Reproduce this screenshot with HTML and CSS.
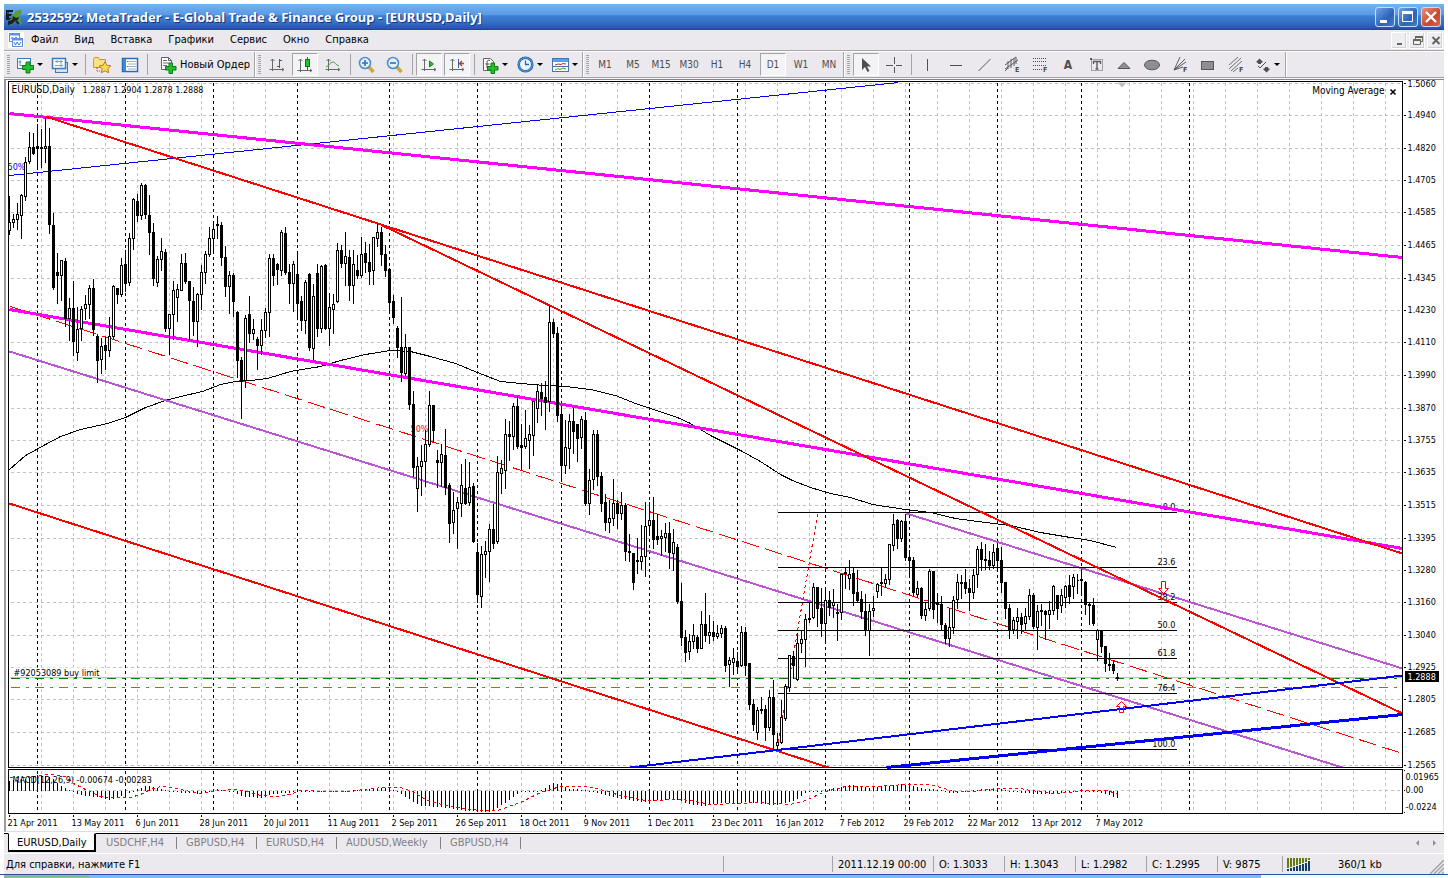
FILE: index.html
```html
<!DOCTYPE html>
<html lang="ru">
<head>
<meta charset="utf-8">
<title>2532592: MetaTrader - E-Global Trade &amp; Finance Group - [EURUSD,Daily]</title>
<link rel="stylesheet" href="styles.css">
</head>
<body>
<div class="window">
  <header class="title-bar">
    <svg class="app-icon" width="16" height="16" viewBox="0 0 16 16"><path d="M0 1h7v2H3v2h3v2H3v2h3v2H0z" fill="#15191f"/><path d="M1 4h5M4 8h3" stroke="#3f74c8"/><path d="M8 5l2-4 2 1 2-2 2 3-3 4 2 3-1 2 2 3-3 1-4-4-3 4-4-1 1-4 3-2-1-3z" fill="#5d9a35"/><path d="M7 7l3 2 3-1-1 3-3 1-3 3-4 1v-4l4-1z" fill="#16202c"/><path d="M10 12l3 3" stroke="#16202c" stroke-width="2"/></svg>
    <h1 class="title-text">2532592: MetaTrader - E-Global Trade &amp; Finance Group - [EURUSD,Daily]</h1>
    <div class="caption-buttons">
      <button class="caption" aria-label="Свернуть"><svg width="18" height="18" viewBox="0 0 18 18"><path d="M4 12h7v3H4z" fill="#fff"/></svg></button>
      <button class="caption" aria-label="Развернуть"><svg width="18" height="18" viewBox="0 0 18 18"><path d="M3.500 4.500h10v9h-10z" fill="none" stroke="#fff"/><path d="M3 4.500h11" stroke="#fff" stroke-width="3"/></svg></button>
      <button class="caption caption-close" aria-label="Закрыть"><svg width="18" height="18" viewBox="0 0 18 18"><path d="M4 4l10 10M14 4L4 14" stroke="#fff" stroke-width="2.400"/></svg></button>
    </div>
  </header>

  <nav class="menu-bar">
    <svg width="16" height="16" viewBox="0 0 16 16"><rect width="16" height="16" fill="#fff"/><rect x="1.500" y="1.500" width="10" height="8" fill="#fff" stroke="#5d92e0"/><path d="M1 2.500h11" stroke="#5d92e0" stroke-width="2"/><path d="M3 7l1.500-2L6 7l2-2 2 2" fill="none" stroke="#5d92e0"/><rect x="4.500" y="6.500" width="10" height="8" fill="#fff" stroke="#5d92e0"/><path d="M4 7.500h11" stroke="#5d92e0" stroke-width="2"/><path d="M6 10l1.500 3L9 10l2 3 2-3" fill="none" stroke="#3b7ad6"/></svg>
    <a href="#file">Файл</a><a href="#view">Вид</a><a href="#insert">Вставка</a><a href="#charts">Графики</a><a href="#tools">Сервис</a><a href="#window">Окно</a><a href="#help">Справка</a>
    <div class="mdi-buttons">
      <button aria-label="Свернуть график"><svg width="14" height="15" viewBox="0 0 14 15"><path d="M4 9h5v2H4z" fill="#66665f"/></svg></button>
      <button aria-label="Восстановить график"><svg width="14" height="15" viewBox="0 0 14 15"><path d="M4.500 5V2.500h7v5H10M2.500 5.500h7v5h-7z" fill="none" stroke="#66665f"/><path d="M4 3h8M2 6h8" stroke="#66665f" stroke-width="2"/></svg></button>
      <button aria-label="Закрыть график"><svg width="14" height="15" viewBox="0 0 14 15"><path d="M3.500 3l7 7M10.500 3l-7 7" stroke="#66665f" stroke-width="2"/></svg></button>
    </div>
  </nav>

  <div class="toolbars">
    <div class="band">
      <button class="tool drop" aria-label="Новый график"><svg width="18" height="18" viewBox="0 0 18 18"><rect x="1.500" y="2.500" width="13" height="10" fill="#fff" stroke="#3f78b4"/><path d="M4 4v6M2.500 6h3M4 9.500h8" stroke="#5b92c8" fill="none"/><path d="M10 6h4v3.500h3.500v4H14V17h-4v-3.500H6.500v-4H10z" fill="#22c12c" stroke="#087a12"/></svg><i class="arrow"></i></button>
      <button class="tool drop" aria-label="Профили"><svg width="18" height="18" viewBox="0 0 18 18"><rect x="4.500" y="6.500" width="12" height="10" fill="#cfe3f7" stroke="#3f78b4"/><rect x="1.500" y="2.500" width="13" height="10" fill="#fff" stroke="#3f78b4" stroke-width="1.500"/><path d="M4 5.500h8M4 9.500h8M10 4v7M6 4v3" stroke="#6f9fd0" fill="none"/></svg><i class="arrow"></i></button>
      <span class="sep"></span>
      <button class="tool" aria-label="Избранное"><svg width="20" height="18" viewBox="0 0 20 18"><path d="M1.500 3.500l1-2h4l1 2h6v8h-12z" fill="#f8e37c" stroke="#c79a22"/><path d="M5 11v4h3" fill="none" stroke="#b5473c" stroke-dasharray="2 1"/><path d="M13 5.500l1.900 3.800 4 .5-3 2.800.8 4.200-3.700-2-3.700 2 .8-4.200-3-2.800 4-.5z" fill="#fbd85a" stroke="#b98212"/></svg></button>
      <button class="tool" aria-label="Обзор рынка"><svg width="18" height="16" viewBox="0 0 18 16"><rect x="1.500" y="1.500" width="15" height="13" fill="#fff" stroke="#2a6cb8" stroke-width="1.500"/><path d="M2 2h3v12H2z" fill="#3a8ae0"/><path d="M7 4.500h8M7 7h8M7 9.500h8M7 12h8" stroke="#9ab0cc"/><path d="M6 4h1v1H6zM6 9h1v1H6z" fill="#d33"/></svg></button>
      <span class="sep"></span>
      <button class="tool order"><svg width="18" height="18" viewBox="0 0 18 18"><path d="M2.500 1.500h7l3 3v9h-10z" fill="#fff" stroke="#5f6266"/><path d="M9.500 1.500v3h3" fill="none" stroke="#5f6266"/><path d="M4 4.500h4M4 7h6M4 9.500h4" stroke="#6d7074"/><path d="M10 7h3.500v3.500H17v3.500h-3.500v3.500H10V14H6.500v-3.500H10z" fill="#22c12c" stroke="#087a12"/></svg>Новый Ордер</button>
    </div>
    <div class="band">
      <button class="tool" aria-label="Бары"><svg width="18" height="16" viewBox="0 0 18 16"><path d="M4.500 2v12M1.500 12.500h14M2.500 4l2-2 2 2M14 11l2 1.500-2 1.500" fill="none" stroke="#66696c"/><path d="M11.500 2v9M9 9.500h2.500M11.500 3.500H14" fill="none" stroke="#178a1e"/></svg></button>
      <button class="tool pressed" aria-label="Свечи"><svg width="18" height="18" viewBox="0 0 18 18"><path d="M4.500 3v13M1.500 14.500h14M2.500 5l2-2 2 2M14 13l2 1.500-2 1.500" fill="none" stroke="#66696c"/><path d="M11.500 1v13" stroke="#178a1e"/><rect x="9.500" y="3.500" width="4" height="7" fill="#22c12c" stroke="#087a12"/></svg></button>
      <button class="tool" aria-label="Линия"><svg width="18" height="16" viewBox="0 0 18 16"><path d="M4.500 2v12M1.500 12.500h14M2.500 4l2-2 2 2M14 11l2 1.500-2 1.500" fill="none" stroke="#66696c"/><path d="M2 10c3-1 4-5 7-5 2 0 3 3 6 4" fill="none" stroke="#4f9a54"/></svg></button>
      <span class="sep"></span>
      <button class="tool" aria-label="Увеличить"><svg width="18" height="18" viewBox="0 0 18 18"><path d="M10.500 10.500l5 5.500" stroke="#d0a93a" stroke-width="3.500"/><circle cx="7" cy="7" r="5.500" fill="#e3f1fd" stroke="#4c8fd2" stroke-width="1.600"/><path d="M4 7h6M7 4v6" stroke="#2a70bd" stroke-width="1.600"/></svg></button>
      <button class="tool" aria-label="Уменьшить"><svg width="18" height="18" viewBox="0 0 18 18"><path d="M10.500 10.500l5 5.500" stroke="#d0a93a" stroke-width="3.500"/><circle cx="7" cy="7" r="5.500" fill="#e3f1fd" stroke="#4c8fd2" stroke-width="1.600"/><path d="M4 7h6" stroke="#2a70bd" stroke-width="1.600"/></svg></button>
      <span class="sep"></span>
      <button class="tool pressed" aria-label="Автопрокрутка"><svg width="18" height="16" viewBox="0 0 18 16"><path d="M4.500 2v12M1.500 12.500h14M2.500 4l2-2 2 2M14 11l2 1.500-2 1.500" fill="none" stroke="#66696c"/><path d="M9.500 4l4 3-4 3z" fill="#22c12c" stroke="#178a1e"/></svg></button>
      <button class="tool pressed" aria-label="Сдвиг графика"><svg width="18" height="16" viewBox="0 0 18 16"><path d="M4.500 2v12M1.500 12.500h14M2.500 4l2-2 2 2M14 11l2 1.500-2 1.500" fill="none" stroke="#66696c"/><path d="M10.500 2v9" stroke="#2b62a8"/><path d="M16 6.500h-4.500M14 4l-2.500 2.500L14 9" fill="none" stroke="#b8401c" stroke-width="1.400"/></svg></button>
      <span class="sep"></span>
      <button class="tool drop" aria-label="Индикаторы"><svg width="17" height="18" viewBox="0 0 17 18"><path d="M1.500 2.500h7l3 3v9h-10z" fill="#fff" stroke="#5f6266"/><path d="M8 4.500c-2-.8-3 0-3 2V12M3.500 8h4" fill="none" stroke="#44474a"/><path d="M9 7h3.500v3.500H16v3.500h-3.500v3.500H9V14H5.500v-3.500H9z" fill="#22c12c" stroke="#087a12"/></svg><i class="arrow"></i></button>
      <button class="tool drop" aria-label="Периоды"><svg width="17" height="17" viewBox="0 0 17 17"><circle cx="8.500" cy="8.500" r="6.800" fill="#eef6fd" stroke="#2363ae" stroke-width="2.600"/><circle cx="8.500" cy="8.500" r="6.800" fill="none" stroke="#5fa0e4" stroke-width="1"/><path d="M8.500 4.500v4H12" fill="none" stroke="#33669a" stroke-width="1.300"/></svg><i class="arrow"></i></button>
      <button class="tool drop" aria-label="Шаблоны"><svg width="17" height="16" viewBox="0 0 17 16"><rect x=".500" y="1.500" width="16" height="13" fill="#fff" stroke="#3f78b4"/><path d="M1 2h15v3H1z" fill="#5c9ee6"/><path d="M3 8l3-1 3 .500 2-1 3 .500" fill="none" stroke="#a5382b"/><path d="M1 9.500h15" stroke="#3f78b4"/><path d="M3 13l3-1.500 2 1 3-1.500 3 1" fill="none" stroke="#3a9a3e"/></svg><i class="arrow"></i></button>
    </div>
    <div class="band">
      <button class="tool">M1</button><button class="tool">M5</button><button class="tool">M15</button><button class="tool">M30</button><button class="tool">H1</button><button class="tool">H4</button><button class="tool pressed">D1</button><button class="tool">W1</button><button class="tool">MN</button>
    </div>
    <div class="band drawing">
      <button class="tool pressed" aria-label="Курсор"><svg width="16" height="16" viewBox="0 0 16 16"><path d="M4 1v12l3-3 2.500 5 2-1L9 9.500h4z" fill="#4d4f52"/></svg></button>
      <button class="tool" aria-label="Перекрестие"><svg width="16" height="16" viewBox="0 0 16 16"><path d="M8.500 0v7M8.500 10v6M0 8.500h7M10 8.500h6" stroke="#55575a"/></svg></button>
      <span class="sep"></span>
      <button class="tool" aria-label="Вертикальная линия"><svg width="14" height="14" viewBox="0 0 14 14"><path d="M6.500 1v12" stroke="#4d4f52"/></svg></button>
      <button class="tool" aria-label="Горизонтальная линия"><svg width="14" height="14" viewBox="0 0 14 14"><path d="M1 7.500h12" stroke="#4d4f52"/></svg></button>
      <button class="tool" aria-label="Трендовая линия"><svg width="14" height="14" viewBox="0 0 14 14"><path d="M1.500 13L13.500 1" stroke="#55575a"/></svg></button>
      <button class="tool" aria-label="Канал"><svg width="17" height="17" viewBox="0 0 17 17"><path d="M1 9l11-8M1 13L14 4M4 5v8M7 3v9M10 2v8M12 1v7M1 15l3-3" stroke="#5a5c60" fill="none"/><text x="11" y="16" class="glyph">E</text></svg></button>
      <button class="tool" aria-label="Линии Фибоначчи"><svg width="17" height="17" viewBox="0 0 17 17"><path d="M1 2.500h14M1 5.500h14M1 9.500h14M1 13.500h9" stroke="#4d4f52" stroke-dasharray="1 1"/><text x="11" y="16" class="glyph">F</text></svg></button>
      <button class="tool letter">A</button>
      <button class="tool" aria-label="Текстовая метка"><svg width="15" height="15" viewBox="0 0 15 15"><rect x="2.500" y="2.500" width="11" height="11" fill="none" stroke="#5a5c60" stroke-dasharray="1 1"/><path d="M1 1h2v2H1z" fill="#5a5c60"/><path d="M4 4.500h8M8 5v7M4.500 4v3M11.500 4v3M6.500 12h3" fill="none" stroke="#5a5c60" stroke-width="1.400"/></svg></button>
      <button class="tool" aria-label="Треугольник"><svg width="16" height="14" viewBox="0 0 16 14"><path d="M2 10.500l6-6 6 6z" fill="#8e8f92" stroke="#55575a"/></svg></button>
      <button class="tool" aria-label="Эллипс"><svg width="18" height="14" viewBox="0 0 18 14"><ellipse cx="9" cy="7" rx="7.500" ry="4.800" fill="#8e8f92" stroke="#55575a"/></svg></button>
      <button class="tool" aria-label="Веер Фибоначчи"><svg width="17" height="17" viewBox="0 0 17 17"><path d="M2 14L8 1M2 14l11-11M2 14l12-8M2 14l9-3" stroke="#5a5c60"/><text x="11" y="16" class="glyph">F</text></svg></button>
      <button class="tool" aria-label="Прямоугольник"><svg width="16" height="14" viewBox="0 0 16 14"><rect x="1.500" y="3.500" width="12" height="8" fill="#8e8f92" stroke="#55575a"/></svg></button>
      <button class="tool" aria-label="Канал Фибоначчи"><svg width="17" height="17" viewBox="0 0 17 17"><path d="M1 9l9-8M1 13L13 2M3 15L14 5M5 16l5-4" stroke="#6e7074"/><text x="11" y="16" class="glyph">F</text></svg></button>
      <button class="tool drop" aria-label="Стрелки"><svg width="16" height="16" viewBox="0 0 16 16"><path d="M1 5l3.500-3.500L8 5 6 6v1H3V6zM8 12l2-1v-1h3v1l2 1-3.500 3.500z" fill="#4d4f52"/><path d="M3 9l2 2 6-6" stroke="#4d4f52" fill="none"/></svg><i class="arrow"></i></button>
    </div>
  </div>

  <main class="chart-frame">
    <svg class="chart" id="chart" viewBox="5.500 79.500 1437 751" role="img" aria-label="EURUSD,Daily"></svg>
  </main>

  <nav class="tabs">
    <a class="tab active" href="#eurusd-daily">EURUSD,Daily</a><a class="tab" href="#usdchf">USDCHF,H4</a><a class="tab" href="#gbpusd">GBPUSD,H4</a><a class="tab" href="#eurusd">EURUSD,H4</a><a class="tab" href="#audusd">AUDUSD,Weekly</a><a class="tab" href="#gbpusd-2">GBPUSD,H4</a>
    <div class="tab-scroll">
      <button aria-label="Назад"><svg width="5" height="8" viewBox="0 0 5 8"><path d="M4 1v6L1 4z" fill="#8e8f92"/></svg></button>
      <button aria-label="Вперёд"><svg width="5" height="8" viewBox="0 0 5 8"><path d="M1 1v6l3-3z" fill="#8e8f92"/></svg></button>
    </div>
  </nav>

  <footer class="status">
    <span class="cell help">Для справки, нажмите F1</span>
    <span class="cell profile"></span>
    <span class="cell time">2011.12.19 00:00</span>
    <span class="cell value">O: 1.3033</span>
    <span class="cell value">H: 1.3043</span>
    <span class="cell value">L: 1.2982</span>
    <span class="cell value">C: 1.2995</span>
    <span class="cell volume">V: 9875</span>
    <span class="cell link"><svg width="24" height="13" viewBox="0 0 24 13"><path d="M1 0v10M4 0v9M7 0v8M10 0v7M13 0v6M16 0v5M19 0v4M22 0v2" stroke="#667a14" stroke-width="2"/><path d="M1 11v2M4 10v3M7 9v4M10 8v5M13 7v6M16 6v7M19 5v8M22 3v10" stroke="#123f63" stroke-width="2"/></svg>360/1 kb</span>
    <svg class="resize" width="14" height="14" viewBox="0 0 14 14"><path d="M0 14L14 0M4 14L14 4M8 14l6-6M12 14l2-2" stroke="#a6a5aa" stroke-width="1.500"/></svg>
  </footer>
</div>
<div class="taskbar"><span class="start"></span><span class="tasks"></span><span class="tray"></span></div>
<script src="chart.js"></script>
</body>
</html>
```
FILE: styles.css
```css
* { box-sizing: border-box; }

body {
  margin: 0;
  background: #fff;
  color: #000;
  font: 11px/14px "DejaVu Sans Condensed", "Noto Sans", sans-serif;
}

button {
  margin: 0;
  padding: 0;
  border: 0;
  background: none;
  color: inherit;
  font: inherit;
}

a { color: inherit; text-decoration: none; }
svg { display: block; flex: none; }

.window { padding: 4px 4px 0; }

.title-bar {
  display: flex;
  align-items: center;
  height: 26px;
  padding: 0 3px 0 2px;
  gap: 5px;
  background: linear-gradient(#74b6ea 0, #68a6ea 20%, #5b9be6 40%, #3c80d2 46%, #3570c6 70%, #2b52ac 94%, #1f3f94 100%);
}
.title-text {
  flex: 1;
  margin: 0;
  color: #fff;
  font: bold 13px/20px "Noto Sans", sans-serif;
  white-space: nowrap;
  text-shadow: 1px 1px 0 #16337e;
}
.caption-buttons { display: flex; gap: 3px; }
.caption {
  width: 20px;
  height: 20px;
  padding: 0;
  border: 1px solid #c4dcf6;
  border-radius: 3px;
  background: linear-gradient(135deg, #6fa5e6, #2c62b8 60%, #3f7dcc);
}
.caption-close { background: linear-gradient(135deg, #e8907a, #c9452c 60%, #d86a4c); }

.menu-bar {
  display: flex;
  align-items: center;
  height: 22px;
  padding: 0 1px 1px 4px;
  gap: 16px;
  border-bottom: 1px solid #fff;
  box-shadow: inset 0 -1px #a3a3a8;
  background: #ebe9ed;
}
.menu-bar > svg { margin-right: -9px; }
.mdi-buttons { display: flex; gap: 2px; margin-left: auto; }
.mdi-buttons button {
  width: 16px;
  height: 17px;
  padding: 1px;
  border: 1px solid #fff;
  background: #eeedf1;
  box-shadow: inset -1px -1px #d2d1d7;
}

.toolbars {
  display: flex;
  height: 28px;
  background: #ebe9ed;
  border-bottom: 1px solid #85858b;
  box-shadow: inset 0 -1px #f4f3f6, inset 0 -2px #a3a3a8;
}
.band {
  display: flex;
  align-items: center;
  height: 25px;
  border-right: 1px solid #a3a3a8;
  box-shadow: 1px 0 #fff;
  color: #4b4d50;
  font-size: 10px;
}
.band::before {
  content: "";
  width: 3px;
  height: 20px;
  margin: 0 2px 0 3px;
  background: repeating-linear-gradient(#a3a3a8 0 1px, #ebe9ed 1px 2px);
}
.tool {
  display: flex;
  align-items: center;
  justify-content: center;
  flex: none;
  width: 28px;
  height: 23px;
}
.pressed {
  margin: 0 1px;
  width: 26px;
  border: 1px solid #fff;
  border-top-color: #a3a3a8;
  border-left-color: #a3a3a8;
  background: #f4f3f6;
}
.drop { width: 35px; gap: 3px; }
.order { justify-content: flex-start; width: 104px; padding-left: 9px; gap: 3px; color: #000; font-size: 11px; }
.letter { font-size: 12px; font-weight: bold; }
.arrow {
  border: 3px solid transparent;
  border-top-color: #000;
  border-bottom: 0;
}
.sep { width: 1px; height: 21px; margin: 0 2px 0 3px; background: #a3a3a8; }
.glyph { font: bold 7px "DejaVu Sans Condensed", sans-serif; fill: #4b4d50; }

.chart-frame {
  border-left: 2px solid #9a9aa0;
  border-right: 1px solid #d9dae2;
  border-bottom: 1px solid #dcdce2;
  background: #fff;
  margin-bottom: 1px;
}
.chart { width: 100%; height: auto; overflow: visible; }
.chart text { font: 9px "DejaVu Sans Condensed", "Noto Sans", sans-serif; }
.chart .caption-text { font-size: 10px; }

.tabs {
  display: flex;
  height: 20px;
  padding-left: 4px;
  border-top: 1px solid #000;
  border-bottom: 1px solid #ebe9ed;
  background: #ebe9ed;
  color: #808086;
}
.tab { position: relative; width: 80px; padding: 2px 0 0 10px; white-space: nowrap; }
.tab:nth-child(5) { width: 104px; }
.tab:not(.active)::after {
  content: "";
  position: absolute;
  right: -1px;
  top: 3px;
  width: 1px;
  height: 12px;
  background: #808086;
}
.active {
  width: 88px;
  margin-top: -1px;
  padding-left: 8px;
  border: 1px solid #000;
  border-top-color: #fff;
  border-right-width: 2px;
  border-bottom-width: 2px;
  background: #fff;
  color: #000;
}
.tab-scroll { display: flex; gap: 12px; margin: 0 7px 0 auto; }

.status {
  display: flex;
  align-items: center;
  height: 21px;
  border-top: 1px solid #fff;
  background: #ebe9ed;
  white-space: nowrap;
}
.cell {
  height: 16px;
  padding: 2px 0 0 5px;
  border-left: 1px solid #a3a3a8;
}
.help { flex: 1; padding-left: 2px; border-left: 0; }
.profile { width: 109px; }
.time { width: 101px; }
.value { width: 71px; }
.volume { width: 65px; }
.link { display: flex; width: 148px; padding-left: 4px; gap: 27px; }
.resize { align-self: flex-end; }

.taskbar {
  display: flex;
  height: 4px;
  padding: 0 4px;
  border-top: 1px solid #2c4fae;
}
.start { width: 85px; background: #7fc08c; }
.tasks { flex: 1; background: #7dbdf2; }
.tray { width: 183px; background: #f4f8ff; }
```
FILE: chart.js
```js
const NS = 'http://www.w3.org/2000/svg';
const chart = document.getElementById('chart');

function add(tag, attrs, text) {
  const el = document.createElementNS(NS, tag);
  for (const key in attrs) el.setAttribute(key, attrs[key]);
  if (text) el.textContent = text;
  chart.appendChild(el);
}

function line(x1, y1, x2, y2, color, width = 1, dash = 'none') {
  add('path', {
    d: `M${x1} ${y1}L${x2} ${y2}`, stroke: color, fill: 'none',
    'stroke-width': width, 'stroke-dasharray': dash, 'shape-rendering': 'crispEdges'
  });
}

function curve(points, color, dash = 'none') {
  add('path', {
    d: 'M' + points.join('L'), stroke: color, fill: 'none',
    'stroke-dasharray': dash, 'shape-rendering': 'crispEdges'
  });
}

function label(x, y, text, fill = '#000', extra = {}) {
  add('text', { x, y, fill, ...extra }, text);
}

const pairs = source => source.trim().split(/\s+/).map(p => p.split(',').map(Number));

// Grid
const prices = ['1.5060', '1.4940', '1.4820', '1.4705', '1.4585', '1.4465', '1.4345', '1.4230', '1.4110', '1.3990', '1.3870', '1.3755', '1.3635', '1.3515', '1.3395', '1.3280', '1.3160', '1.3040', '1.2925', '1.2805', '1.2685', '1.2565'];
const levels = [83, 115, 148, 180, 212, 245, 278, 310, 342, 375, 408, 440, 472, 505, 538, 570, 602, 635, 667, 699, 732, 765];
levels.forEach(y => line(10, y, 1401, y, '#c0c0c0', 1, '3 3'));
for (let x = 41; x < 1400; x += 32) {
  line(x, 82, x, 767, '#c0c0c0', 1, '3 3');
  line(x, 770, x, 812, '#c0c0c0', 1, '3 3');
}
line(10, 790, 1401, 790, '#c0c0c0', 1, '3 3');
[37, 125, 213, 297, 389, 477, 561, 649, 737, 825, 909, 997, 1081, 1189].forEach(x => {
  line(x, 82, x, 767, '#000', 1, '3 3');
  line(x, 770, x, 812, '#000', 1, '3 3');
});

// Price and order levels
line(9, 677, 1402, 677, '#c0c0c0');
line(10, 678, 1402, 678, '#008000', 1, '9 6 3 6');
line(10, 687, 1402, 687, '#ff4500', 1, '9 6 3 6');

// Moving average
curve(pairs(`9,469 25,455 45,444 60,436 80,429 107,423 125,417 145,407 165,400 180,396 202,391 220,384 235,381 250,380
267,378 290,371 320,366 340,360 365,354 390,350 410,351 430,356 455,363 477,372 500,381 520,383 545,385 565,386 590,389
615,395 635,403 650,408 677,417 690,423 710,435 740,450 760,461 780,474 792,480 810,487 830,493 850,497 872,504 905,509
930,512 955,518 985,522 1010,525 1040,532 1070,537 1090,540 1116,547`), '#000');

// Trend lines and channels
line(9, 175, 898, 82, '#0000ff');
line(9, 351, 1342, 767, '#ba55d3', 2);
line(906, 513, 1402, 668, '#ba55d3', 2);
line(10, 306, 1402, 753, '#ff0000', 1, '18 6');
line(817, 514, 777, 747, '#ff0000', 1, '3 3');

// Fibonacci retracement
[[512, '0.0'], [567, '23.6'], [602, '38.2'], [630, '50.0'], [658, '61.8'], [693, '76.4'], [749, '100.0']].forEach(([y, text]) => {
  line(777, y, 1176, y, '#000');
  label(1175, y - 3, text, '#000', { 'text-anchor': 'end' });
});

line(9, 113, 1402, 257, '#ff00ff', 3);
line(9, 309, 1402, 548, '#ff00ff', 3);
line(45, 116, 1402, 553, '#ff0000', 2);
line(382, 225, 1402, 713, '#ff0000', 2);
line(9, 503, 828, 767, '#ff0000', 2);
line(630, 767, 1402, 675, '#0000ff', 2);
line(886, 767, 1402, 714, '#0000ff', 3);
label(7, 169, '50%', '#0000ff');
label(410, 431, '50%', '#ff0000');

// Candles: high, body top, body bottom, low, o = hollow / x = filled
const candles = `195 222 230 234 o|213 219 222 227 o|202 214 219 229 o|193 195 215 238 o|156 162 196 200 o|131 147 161 163 o|132 147 153 154 x|123 146 148 168 x|128 147 148 167 x|116 146 148 162 o
127 146 224 233 x|212 225 287 289 x|252 272 275 303 x|260 260 275 300 o|257 261 318 326 x|297 308 318 340 o|280 308 341 355 x|306 329 352 360 o|305 309 328 340 o|294 304 308 319 o
284 288 304 318 o|278 288 329 335 x|333 336 360 382 x|337 346 359 373 o|336 345 350 369 x|316 336 350 356 o|284 286 336 338 o|288 288 294 303 x|257 265 294 296 o|249 264 283 291 x
232 238 282 285 o|197 199 238 249 o|193 201 215 221 x|182 185 215 219 o|183 185 214 218 x|194 215 232 254 x|222 232 278 285 x|255 259 282 286 o|237 251 259 270 o|248 252 328 331 x
313 314 328 354 o|280 290 314 339 o|283 289 297 321 o|253 263 290 290 o|252 263 281 283 x|280 281 300 339 x|286 301 321 335 x|292 294 321 346 o|264 272 294 309 o|250 254 272 283 o
226 238 254 256 o|220 229 238 253 o|215 224 225 238 x|221 225 257 265 x|245 257 286 296 x|270 275 286 313 o|272 275 301 316 x|310 312 360 377 x|356 360 381 418 x|314 318 380 387 o
295 314 333 342 x|318 329 333 339 o|336 339 345 369 x|318 330 345 354 o|307 312 330 337 o|253 258 312 336 o|253 258 275 285 x|262 264 269 284 x|229 232 270 275 o|226 233 272 274 x
263 272 283 303 x|260 264 283 311 o|250 274 303 319 x|295 301 320 330 x|279 282 320 333 o|272 274 347 350 x|283 296 348 359 o|263 273 328 336 x|264 266 328 332 o|263 265 328 329 x
292 307 328 345 o|293 304 309 333 o|242 250 301 302 o|244 250 263 267 x|231 256 263 285 o|249 257 285 300 x|249 264 285 303 o|254 270 275 278 x|236 254 275 277 o|241 253 262 272 x
243 262 271 284 x|236 237 270 284 o|223 232 238 246 o|226 232 254 265 x|244 254 270 276 x|267 269 302 312 x|294 301 317 323 x|325 328 347 357 x|296 347 372 381 x|333 347 373 375 o
347 347 404 409 x|390 404 467 476 x|456 466 488 511 o|444 461 466 495 o|429 444 461 486 o|390 405 444 446 o|405 405 430 441 x|449 460 462 487 x|443 454 462 486 o|428 455 487 494 x
482 485 523 542 x|491 510 522 533 o|496 502 508 548 o|463 485 503 516 o|458 488 503 504 x|461 487 502 505 o|482 486 541 542 x|542 552 594 602 x|545 554 596 607 o|540 551 554 577 o
523 529 551 581 o|503 529 543 548 x|455 472 541 543 o|459 468 473 493 o|418 434 470 488 o|420 434 436 460 x|402 406 436 449 o|395 406 446 448 x|423 445 447 469 x|409 438 446 448 o
424 434 440 468 o|400 401 435 455 o|384 391 408 422 o|382 392 398 415 x|380 397 402 429 x|305 322 401 411 o|318 322 333 337 x|326 333 415 421 x|405 414 465 480 x|419 447 465 473 o
413 421 448 468 o|407 421 431 453 x|423 424 438 461 x|415 419 437 448 o|411 420 503 505 x|468 480 503 514 o|429 434 479 489 o|429 434 476 485 x|471 476 503 511 x|493 502 522 530 x
499 518 522 532 o|478 503 518 525 o|499 503 513 528 x|491 505 513 519 o|502 505 551 560 x|533 551 552 561 x|552 553 582 589 x|537 560 561 573 x|524 556 561 569 o|501 526 556 576 o
501 520 525 533 o|496 520 539 548 x|513 536 539 544 x|529 536 538 555 o|522 533 537 551 o|521 533 552 568 x|528 542 553 570 o|543 547 601 603 x|582 601 637 645 x|629 637 652 661 x
633 641 651 659 o|623 635 641 648 o|634 637 648 652 x|610 624 648 648 o|592 624 635 641 x|614 632 635 643 o|620 632 636 640 x|624 633 636 638 o|624 628 633 637 o|625 628 665 671 x
656 660 664 686 o|647 658 662 674 o|651 661 666 671 x|625 632 665 666 o|626 632 665 675 x|662 663 704 709 x|698 704 724 730 x|706 710 732 739 o|696 709 710 713 x|704 709 727 740 x
689 697 727 730 o|679 697 734 749 x|732 742 745 749 o|699 717 742 743 o|683 686 718 720 o|654 655 687 691 o|650 656 665 678 x|632 643 679 680 o|629 639 643 652 o|613 619 639 666 o
601 618 619 622 x|582 587 617 618 o|586 587 608 626 x|587 608 623 636 x|587 600 623 642 o|590 600 607 615 x|588 602 605 617 o|603 612 613 640 x|573 574 612 619 o|567 572 573 588 x
559 574 578 589 o|567 573 593 605 x|569 592 600 601 x|590 599 611 618 x|593 611 630 635 x|603 611 630 655 o|595 608 610 616 o|582 584 591 597 o|567 582 583 595 x|573 579 583 587 o
543 544 579 584 o|513 524 545 550 o|518 520 538 548 x|519 521 538 541 o|513 521 557 560 x|549 557 560 577 x|556 560 592 595 x|580 588 594 597 o|586 588 615 618 x|602 609 615 620 o
568 571 608 610 o|571 571 609 618 x|592 603 604 622 x|595 604 624 630 x|622 625 638 643 x|607 627 638 646 o|595 600 627 633 o|573 582 599 608 o|574 582 583 598 x|568 582 588 593 x
578 588 592 610 x|568 575 592 598 o|545 549 574 587 o|541 549 559 570 x|543 559 560 569 x|550 560 565 569 x|543 552 565 568 o|542 548 560 570 x|546 560 582 592 x|581 582 608 618 x
603 608 630 638 x|616 620 629 633 o|607 617 621 638 o|612 617 624 633 x|607 616 623 629 o|588 595 616 619 o|592 595 626 628 x|604 611 627 649 o|603 610 611 625 x|609 611 614 639 x
600 610 614 628 o|584 586 610 614 o|594 595 608 619 x|588 595 605 612 o|584 586 597 607 o|574 585 596 603 x|573 577 586 598 o|573 580 580 593 x|569 579 580 594 x|580 582 604 614 x
601 604 605 624 x|597 605 623 625 x|628 630 639 660 o|630 631 646 652 x|645 646 663 671 x|652 664 665 670 x|659 664 670 673 x|672 677 678 680 x`.split(/[|\n]/);
let wicks = '', hollow = '', filled = '';
candles.forEach((row, i) => {
  const [high, top, bottom, low, kind] = row.split(' ');
  const x = 9 + 4 * i;
  wicks += `M${x} ${high}V${low}`;
  const body = `M${x - 1} ${top}h2V${bottom}h-2z`;
  if (kind === 'o') hollow += body; else filled += body;
});
[[wicks, 'none'], [hollow, '#fff'], [filled, '#000']].forEach(([d, fill]) =>
  add('path', { d, fill, stroke: '#000', 'shape-rendering': 'crispEdges' }));

// Fractal arrows and shift marker
add('path', { d: 'M1161 581h4v7h3l-5 5-5-5h3z', fill: 'none', stroke: '#ff0000' });
add('path', { d: 'M1119 712h4v-6h3l-5-5-5 5h3z', fill: 'none', stroke: '#ff0000' });
add('path', { d: 'M1117 82h9l-4.500 5z', fill: '#c0c0c0' });

// MACD: histogram tops interpolated at each bar, then the signal line
const histogram = pairs(`9,780 30,777 37,774 43,774 50,776 60,784 69,789 73,791 80,794 90,795 100,797 110,799 116,797
125,794 133,790 140,787 145,785 155,786 165,789 170,791 190,792 200,793 207,791 217,788 225,789 233,791 240,795 250,796
263,797 270,794 280,792 300,791 320,791 340,791 365,788 375,787 390,787 400,792 410,799 420,805 440,806 460,809 480,811
490,811 500,805 510,798 520,791 530,791 540,789 546,786 553,782 560,783 570,788 585,789 595,791 605,794 615,797 625,798
640,801 650,800 660,799 670,798 680,800 690,803 700,805 710,804 720,802 735,802 750,801 760,803 775,804 785,802 795,799
803,793 810,791 825,789 835,787 850,784 860,785 870,787 880,785 890,785 900,783 910,784 920,787 930,788 940,789 950,792
965,791 980,788 1000,788 1020,792 1040,793 1060,792 1080,791 1095,791 1105,793 1117,797`);
let bars = '';
for (let x = 9, k = 0; x <= 1117; x += 4) {
  while (histogram[k + 1][0] < x) k++;
  const [x0, y0] = histogram[k], [x1, y1] = histogram[k + 1];
  const y = Math.round(y0 + (y1 - y0) * (x - x0) / (x1 - x0));
  bars += `M${x} 790V${y === 790 ? 791 : y}`;
}
add('path', { d: bars, stroke: '#000', 'shape-rendering': 'crispEdges' });
curve(pairs(`9,777 30,777 40,775 50,774 65,776 73,783 85,789 100,796 110,797 130,797 140,794 150,789 160,786 172,787
185,790 200,793 220,790 235,789 247,791 260,795 275,796 290,794 300,790 330,791 350,791 370,788 385,787 400,787 412,791
425,799 437,803 455,807 480,810 497,810 520,802 540,792 560,786 587,786 600,789 620,795 645,800 680,799 690,800 710,804
740,803 755,802 790,804 805,800 825,791 845,786 875,786 905,784 930,784 940,787 955,791 975,791 985,789 1000,788 1020,788
1030,790 1055,793 1070,792 1080,790 1105,790 1117,793`), '#ff0000', '3 3');

// Frames, captions and axes
add('path', { d: 'M8 81H1402V767H8zM8 769H1402V813H8z', fill: 'none', stroke: '#000', 'shape-rendering': 'crispEdges' });
label(11, 92, 'EURUSD,Daily', '#000', { class: 'caption-text' });
label(82, 92, '1.2887 1.2904 1.2878 1.2888');
label(1384, 93, 'Moving Average', '#000', { class: 'caption-text', 'text-anchor': 'end' });
add('path', { d: 'M1390 89l5 5M1395 89l-5 5', stroke: '#000', 'stroke-width': 1.5 });
add('rect', { x: 13, y: 667, width: 88, height: 9, fill: '#fff' });
label(13, 675, '#92053089 buy limit');
label(12, 782, 'MACD(12,26,9) -0.00674 -0.00283');

levels.forEach((y, i) => {
  line(1403, y, 1405, y, '#000');
  label(1407, i ? y + 2 : y + 3, prices[i]);
});
[[770, 779, '0.01965'], [790, 792, '0.00'], [812, 809, '-0.0224']].forEach(([tick, y, text]) => {
  line(1403, tick, 1404, tick, '#000');
  label(1405, y, text);
});
add('rect', { x: 1404.5, y: 670.5, width: 34, height: 11, fill: '#000' });
label(1407, 679, '1.2888', '#fff');

['21 Apr 2011', '13 May 2011', '6 Jun 2011', '28 Jun 2011', '20 Jul 2011', '11 Aug 2011', '2 Sep 2011', '26 Sep 2011', '18 Oct 2011', '9 Nov 2011', '1 Dec 2011', '23 Dec 2011', '16 Jan 2012', '7 Feb 2012', '29 Feb 2012', '22 Mar 2012', '13 Apr 2012', '7 May 2012'].forEach((text, i) => {
  const x = 9 + 64 * i;
  line(x, 814, x, 816, '#000');
  label(x - 2, 825, text);
});
```
